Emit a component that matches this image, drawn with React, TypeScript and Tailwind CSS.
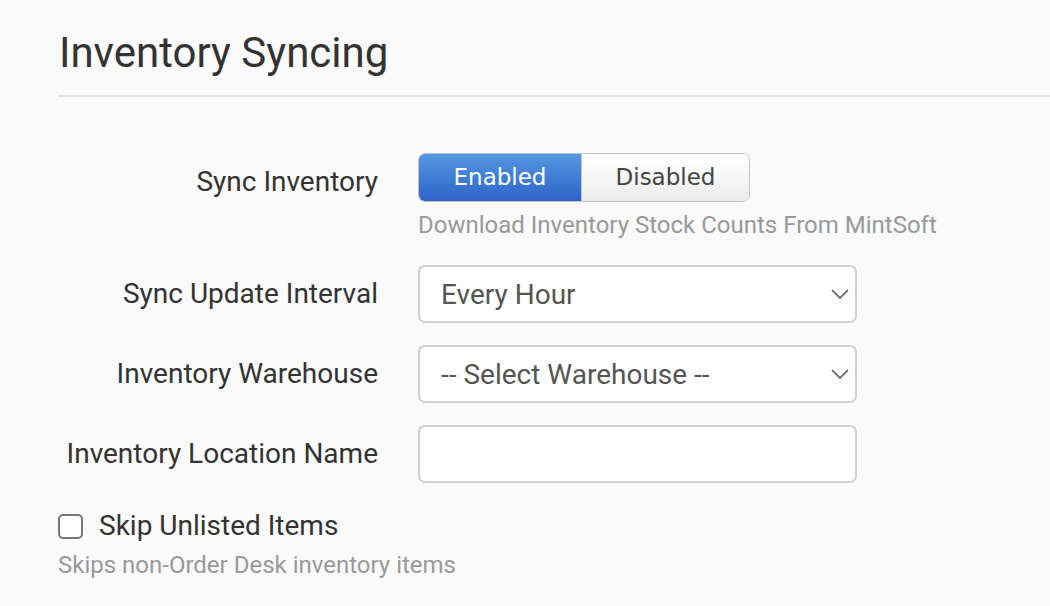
function Label({ children }: { children: React.ReactNode }) {
  return (
    <div className="w-[322px] shrink-0 pr-[2px] text-right text-[28px] leading-none text-[#333]">
      {children}
    </div>
  )
}

function SelectBox({ value }: { value: string }) {
  return (
    <div className="flex h-[58px] w-[439px] items-center justify-between rounded-[7px] border-2 border-[#d0d0d0] bg-white pl-[21px] pr-[6px] text-[28px] text-[#555]">
      <span className="pt-[2px]">{value}</span>
      <svg width="18" height="10" viewBox="0 0 18 10">
        <path d="M1 1l8 8 8-8" fill="none" stroke="#555" strokeWidth="1.6" />
      </svg>
    </div>
  )
}

export default function App() {
  return (
    <div
      className="min-h-screen bg-[#fafafa] pl-[58px] pt-[28px] text-[#333]"
      style={{ fontFamily: 'Roboto, "Liberation Sans", sans-serif' }}
    >
      <h1 className="pl-[1px] text-[42px] leading-[50px] font-normal text-[#333]">Inventory Syncing</h1>
      <div className="mt-[17px] h-[2px] bg-[#e2e2e2]" />

      <div className="mt-[56px] flex flex-col">
        <div className="flex items-start gap-[38px]">
          <div className="pt-[15px]">
            <Label>Sync Inventory</Label>
          </div>
          <div className="flex flex-col">
            <div
              className="flex h-[49px] w-[332px] overflow-hidden rounded-[7px] border border-[#c4c4c4] text-[23px]"
              style={{ fontFamily: '"DejaVu Sans", Verdana, sans-serif' }}
            >
              <div className="flex w-[162px] items-center justify-center bg-gradient-to-b from-[#5598e0] to-[#2f63c9] text-white">
                Enabled
              </div>
              <div className="flex flex-1 items-center justify-center border-l border-[#c4c4c4] bg-gradient-to-b from-white to-[#ececec] text-[#444]">
                Disabled
              </div>
            </div>
            <div className="mt-[9px] text-[24px] leading-[28px] text-[#999]">
              Download Inventory Stock Counts From MintSoft
            </div>
          </div>
        </div>

        <div className="mt-[26px] flex items-center gap-[38px]">
          <Label>Sync Update Interval</Label>
          <SelectBox value="Every Hour" />
        </div>

        <div className="mt-[22px] flex items-center gap-[38px]">
          <Label>Inventory Warehouse</Label>
          <SelectBox value="-- Select Warehouse --" />
        </div>

        <div className="mt-[22px] flex items-center gap-[38px]">
          <Label>Inventory Location Name</Label>
          <div className="h-[58px] w-[439px] rounded-[7px] border-2 border-[#d0d0d0] bg-white" />
        </div>

        <div className="mt-[29px] flex items-center gap-[16px]">
          <div className="h-[25px] w-[25px] rounded-[5px] border-2 border-[#777] bg-white" />
          <span className="text-[28px] leading-none text-[#333]">Skip Unlisted Items</span>
        </div>
        <div className="mt-[11px] text-[24px] leading-[28px] text-[#999]">Skips non-Order Desk inventory items</div>
      </div>
    </div>
  )
}
